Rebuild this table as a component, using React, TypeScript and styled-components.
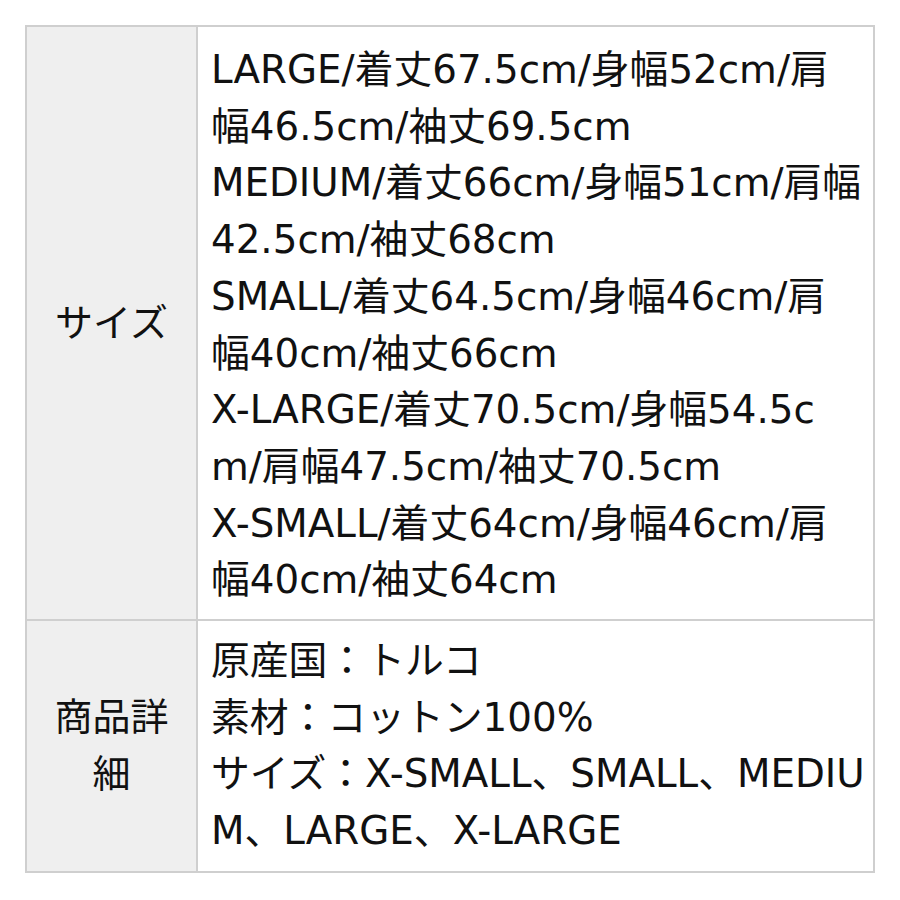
import * as React from 'react';
import styled, { createGlobalStyle } from 'styled-components';

const GlobalStyle = createGlobalStyle`
  html, body {
    margin: 0;
    padding: 0;
    background: #ffffff;
  }
  body {
    font-family: 'DejaVu Sans', 'Noto Sans CJK JP', sans-serif;
    color: #111111;
  }
`;

const Page = styled.div`
  padding: 25px 25px 0 25px;
`;

const SpecTable = styled.table`
  width: 850px;
  border-collapse: collapse;
  table-layout: fixed;
  border: 2px solid #cfcfcf;
`;

const LabelCol = styled.col`
  width: 171px;
`;

const HeadCell = styled.th`
  background: #efefef;
  border: 2px solid #cfcfcf;
  padding: 0 24px;
  font-weight: 400;
  font-size: 38px;
  line-height: 56.7px;
  text-align: center;
  vertical-align: middle;
  color: #111111;
`;

const BodyCell = styled.td<{ $padTop: number; $padBottom: number }>`
  background: #ffffff;
  border: 2px solid #cfcfcf;
  padding: ${p => p.$padTop}px 6px ${p => p.$padBottom}px 13px;
  font-size: 38.8px;
  line-height: 56.7px;
  vertical-align: top;
`;

// visual lines as wrapped in the original (break anywhere)
const Line = styled.div`
  white-space: nowrap;
`;

const sizeLines = [
  'LARGE/着丈67.5cm/身幅52cm/肩',
  '幅46.5cm/袖丈69.5cm',
  'MEDIUM/着丈66cm/身幅51cm/肩幅',
  '42.5cm/袖丈68cm',
  'SMALL/着丈64.5cm/身幅46cm/肩',
  '幅40cm/袖丈66cm',
  'X-LARGE/着丈70.5cm/身幅54.5c',
  'm/肩幅47.5cm/袖丈70.5cm',
  'X-SMALL/着丈64cm/身幅46cm/肩',
  '幅40cm/袖丈64cm',
];

const detailLines = [
  '原産国：トルコ',
  '素材：コットン100%',
  'サイズ：X-SMALL、SMALL、MEDIU',
  'M、LARGE、X-LARGE',
];

export default function App(): JSX.Element {
  return (
    <Page>
      <GlobalStyle />
      <SpecTable>
        <colgroup>
          <LabelCol />
          <col />
        </colgroup>
        <tbody>
          <tr>
            <HeadCell>サイズ</HeadCell>
            <BodyCell $padTop={15} $padBottom={10}>
              {sizeLines.map(s => (
                <Line key={s}>{s}</Line>
              ))}
            </BodyCell>
          </tr>
          <tr>
            <HeadCell>商品詳細</HeadCell>
            <BodyCell $padTop={12} $padBottom={11}>
              {detailLines.map(s => (
                <Line key={s}>{s}</Line>
              ))}
            </BodyCell>
          </tr>
        </tbody>
      </SpecTable>
    </Page>
  );
}
